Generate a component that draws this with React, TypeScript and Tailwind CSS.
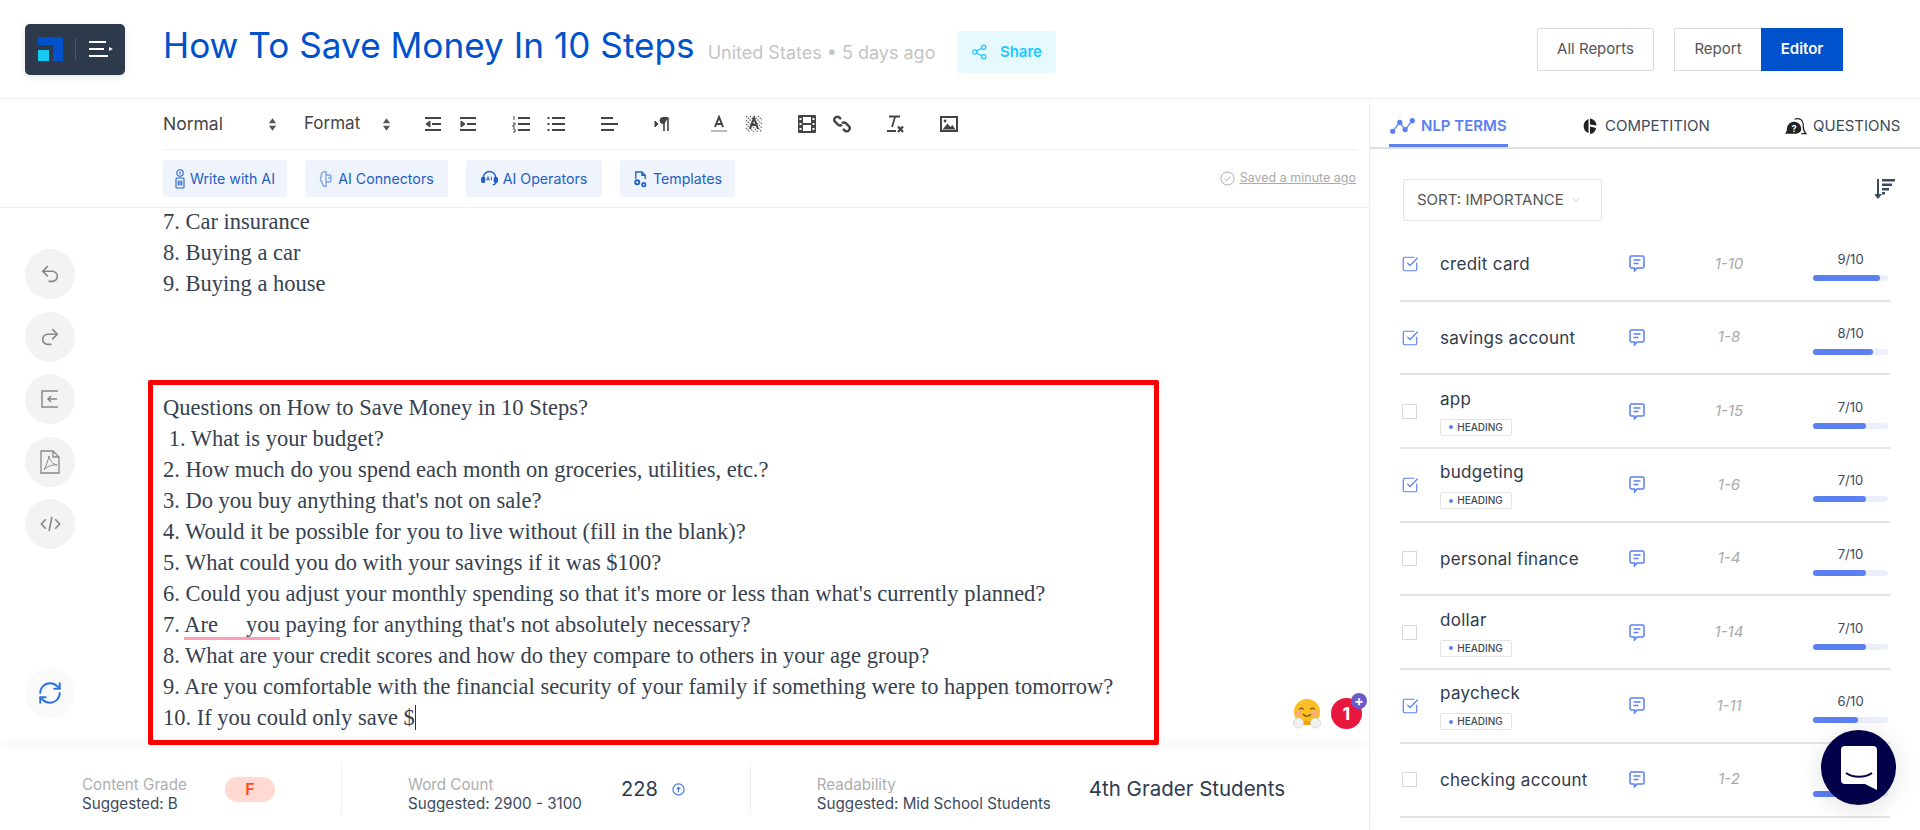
import { ChevronDown, RefreshCw, Redo2, SquareCheckBig, Undo2 } from "lucide-react";
import type { ReactNode } from "react";

interface Term {
  name: string;
  range: string;
  score: number;
  checked?: boolean;
  heading?: boolean;
}

const terms: Term[] = [
  { name: "credit card", range: "1-10", score: 9, checked: true },
  { name: "savings account", range: "1-8", score: 8, checked: true },
  { name: "app", range: "1-15", score: 7, heading: true },
  { name: "budgeting", range: "1-6", score: 7, checked: true, heading: true },
  { name: "personal finance", range: "1-4", score: 7 },
  { name: "dollar", range: "1-14", score: 7, heading: true },
  { name: "paycheck", range: "1-11", score: 6, checked: true, heading: true },
  { name: "checking account", range: "1-2", score: 6 },
];

const questions = [
  "Questions on How to Save Money in 10 Steps?",
  "\u00a01. What is your budget?",
  "2. How much do you spend each month on groceries, utilities, etc.?",
  "3. Do you buy anything that's not on sale?",
  "4. Would it be possible for you to live without (fill in the blank)?",
  "5. What could you do with your savings if it was $100?",
  "6. Could you adjust your monthly spending so that it's more or less than what's currently planned?",
];

function ToolIcon({ children, className = "" }: { children: ReactNode; className?: string }) {
  return (
    <svg viewBox="0 0 18 18" className={`h-[18px] w-[18px] shrink-0 ${className}`} fill="none" stroke="#444" strokeWidth="2">
      {children}
    </svg>
  );
}

function UpDown({ className = "" }: { className?: string }) {
  return (
    <svg viewBox="0 0 10 16" className={`h-[15px] w-[9px] ${className}`} fill="#555">
      <path d="M5 1l4 5.500H1zM5 15l4-5.500H1z" />
    </svg>
  );
}

function Toolbar() {
  return (
    <div className="mr-[12px] ml-[163px] flex h-[51px] items-center border-b border-[#eceff6] text-[17.500px] text-[#444]">
      <span className="w-[105px]">Normal</span>
      <UpDown />
      <span className="ml-[27px] w-[78px] text-[17px]">Format</span>
      <UpDown />
      <ToolIcon className="ml-[33px]">
        <path d="M1 3h16M8 9h9M1 15h16" />
        <path d="M6 6v6L2 9z" fill="#444" strokeWidth="1" />
      </ToolIcon>
      <ToolIcon className="ml-[17px]">
        <path d="M1 3h16M8 9h9M1 15h16" />
        <path d="M2 6v6l4-3z" fill="#444" strokeWidth="1" />
      </ToolIcon>
      <ToolIcon className="ml-[35px]">
        <path d="M6 3h12M6 9h12M6 15h12" />
        <path d="M2 1v4M1 8h2v2H1v2h2M1 14h2v3H1" strokeWidth="1" />
      </ToolIcon>
      <ToolIcon className="ml-[17px]">
        <path d="M5 3h13M5 9h13M5 15h13M0.500 3h2M0.500 9h2M0.500 15h2" />
      </ToolIcon>
      <ToolIcon className="ml-[35px]">
        <path d="M1 3h12M1 9h17M1 15h13" />
      </ToolIcon>
      <ToolIcon className="ml-[36px]">
        <path d="M1 6v6l3-3z" fill="#444" strokeWidth="1" />
        <path d="M10 3v13M14 3v13" strokeWidth="1.600" />
        <path d="M14 2.500h-5a3 3 0 000 6h1z" fill="#444" strokeWidth="1" />
      </ToolIcon>
      <ToolIcon className="ml-[38px]">
        <path d="M5 12l4-10 4 10M6.500 9h5" strokeWidth="2" />
        <path d="M1 16h16" stroke="#bbb" />
      </ToolIcon>
      <ToolIcon className="ml-[17px]">
        <path d="M1 1l16 16M5 1l12 12M1 5l12 12M9 1l8 8M1 9l8 8M13 1l4 4M1 13l4 4" stroke="#666" strokeWidth="1.200" strokeDasharray="1.500 1" />
        <path d="M5 14L9 3l4 11M6.500 10h5" strokeWidth="2" />
      </ToolIcon>
      <ToolIcon className="ml-[35px]">
        <path fillRule="evenodd" d="M1 0h16a1 1 0 011 1v16a1 1 0 01-1 1H1a1 1 0 01-1-1V1a1 1 0 011-1zM5 2v6h8V2zM5 10v6h8v-6zM1.500 3v2h2V3zM1.500 8v2h2V8zM1.500 13v2h2v-2zM14.500 3v2h2V3zM14.500 8v2h2V8zM14.500 13v2h2v-2z" fill="#444" stroke="none" />
      </ToolIcon>
      <ToolIcon className="ml-[17px]">
        <path d="M8 4L6 2.300a3 3 0 00-4 4.400L5 9.600a3 3 0 004 .2" strokeWidth="2.400" />
        <path d="M10 14l2 1.700a3 3 0 004-4.400L13 8.400a3 3 0 00-4-.2" strokeWidth="2.400" />
      </ToolIcon>
      <ToolIcon className="ml-[35px]">
        <path d="M3 1.500h11M9 2L6 12M1 16h9" strokeWidth="1.800" />
        <path d="M12 11.500l5 5.500M17 11.500L12 17" strokeWidth="2.200" />
      </ToolIcon>
      <ToolIcon className="ml-[36px]">
        <path fillRule="evenodd" d="M0 1h18v16H0zM2 3v12h14V3z" fill="#444" stroke="none" />
        <path d="M2.500 14.500l5-6 3 3.500 2-2 3 4.500z" fill="#444" stroke="none" />
        <circle cx="5" cy="6" r="1.400" fill="#444" stroke="none" />
      </ToolIcon>
    </div>
  );
}

function AiButton({ label, width, icon }: { label: string; width: string; icon: ReactNode }) {
  return (
    <button className={`flex h-[37px] items-center justify-center gap-[5px] rounded-[3px] bg-[#eff4fc] text-[14.200px] text-[#2160c4] ${width}`}>
      {icon}
      {label}
    </button>
  );
}

function ActionBar() {
  return (
    <div className="flex h-[58px] items-center border-b border-[#eceff6] pr-[13px] pl-[163px]">
      <div className="flex gap-[18px]">
        <AiButton
          label="Write with AI"
          width="w-[124px]"
          icon={
            <svg viewBox="0 0 10 20" className="h-[20px] w-[10px]" fill="none" stroke="#2160c4" strokeWidth="1.100">
              <circle cx="5" cy="4" r="3.200" />
              <path d="M5 2.500v3" />
              <rect x="1" y="9" width="8" height="10" rx="1" />
              <path d="M3.300 11.500v5M5 11.500v5M6.700 11.500v5" />
            </svg>
          }
        />
        <AiButton
          label="AI Connectors"
          width="w-[143px]"
          icon={
            <svg viewBox="0 0 14 18" className="h-[18px] w-[14px]" fill="none" stroke="#7ea7e6" strokeWidth="1.400">
              <path d="M7 1.500C3 1.500 1.500 4 2.500 6 1 8 1 11 3 12c0 3 2 4.500 4 4.500zM7 5h3a2 2 0 012 2v1H9M7 12h3a2 2 0 002-2V8" />
            </svg>
          }
        />
        <AiButton
          label="AI Operators"
          width="w-[136px]"
          icon={
            <svg viewBox="0 0 18 18" className="h-[17px] w-[17px]" fill="none" stroke="#2160c4" strokeWidth="1.500">
              <path d="M2.500 11V8a6.500 6.500 0 0113 0v3a3 3 0 01-3 4.500" />
              <rect x="0.800" y="8" width="3" height="5" rx="1" fill="#2160c4" />
              <rect x="14.200" y="8" width="3" height="5" rx="1" fill="#2160c4" />
              <path d="M6 11l1.500-4L9 11M6.500 10h2M11 7v4" strokeWidth="1" />
            </svg>
          }
        />
        <AiButton
          label="Templates"
          width="w-[115px]"
          icon={
            <svg viewBox="0 0 16 18" className="h-[18px] w-[15px]" fill="none" stroke="#2160c4" strokeWidth="1.400">
              <path d="M3 9V1.500h6.500L13 5v4M9.500 1.500V5H13" />
              <circle cx="4.500" cy="12.500" r="2.200" strokeWidth="2" />
              <circle cx="11.500" cy="15" r="1.800" strokeWidth="1.800" />
            </svg>
          }
        />
      </div>
      <div className="ml-auto flex items-center gap-[5px] text-[12.500px] text-[#aaa]">
        <svg viewBox="0 0 16 16" className="h-[15px] w-[15px]" fill="none" stroke="#aaa" strokeWidth="1">
          <circle cx="8" cy="8" r="7" />
          <path d="M5 8.300l2.200 2.200L11 6" />
        </svg>
        <span className="underline">Saved a minute ago</span>
      </div>
    </div>
  );
}

function RailButton({ children }: { children: ReactNode }) {
  return <div className="flex h-[50px] w-[50px] items-center justify-center rounded-full bg-[#f3f3f3] text-[#888]">{children}</div>;
}

function SideRail() {
  return (
    <div className="flex w-[148px] shrink-0 flex-col gap-[12.500px] pt-[41px] pb-[30px] pl-[25px]">
      <RailButton>
        <Undo2 size={22} strokeWidth={1.800} />
      </RailButton>
      <RailButton>
        <Redo2 size={22} strokeWidth={1.800} />
      </RailButton>
      <RailButton>
        <svg viewBox="0 0 20 20" className="h-[20px] w-[20px]" fill="none" stroke="#888" strokeWidth="1.500">
          <path d="M18 2H2v16h16M17 10H8M11 7l-3 3 3 3" />
        </svg>
      </RailButton>
      <RailButton>
        <svg viewBox="0 0 20 24" className="h-[24px] w-[20px]" fill="none" stroke="#888" strokeWidth="1.300">
          <path d="M1 1h12l6 6v16H1zM13 1v6h6" />
          <path d="M9 6c1 4 3 8 8 9-4-.5-9 .5-13 5 2-4 4-9 5-14z" strokeWidth="1" />
        </svg>
      </RailButton>
      <RailButton>
        <svg viewBox="0 0 22 16" className="h-[16px] w-[21px]" fill="none" stroke="#888" strokeWidth="1.700">
          <path d="M6 3L1.500 8 6 13M16 3l4.500 5L16 13M12.500 0.500L9.500 15.500" />
        </svg>
      </RailButton>
      <div className="mt-auto flex h-[50px] w-[50px] items-center justify-center rounded-full bg-[#fafafa] text-[#2f74de]">
        <RefreshCw size={26} strokeWidth={1.800} />
      </div>
    </div>
  );
}

function EditorBody() {
  return (
    <div className="flex min-w-0 flex-1 flex-col font-['Liberation_Serif',serif] text-[22.500px] leading-[31px] text-[#36414f]">
      <div className="-mt-[2px] pl-[15px]">
        <p>7. Car insurance</p>
        <p>8. Buying a car</p>
        <p>9. Buying a house</p>
      </div>
      <div className="mt-[81px] w-[1011px] rounded-[2px] border-[5px] border-[#ff0000] pt-[7px] pb-[7px] pl-[10px]">
        {questions.map((q) => (
          <p key={q}>{q}</p>
        ))}
        <p>
          7. <span className="border-b-[3px] border-[#ff9db5]">Are<span className="inline-block w-[28px]" />you</span> paying for anything that's not absolutely necessary?
        </p>
        <p>8. What are your credit scores and how do they compare to others in your age group?</p>
        <p>9. Are you comfortable with the financial security of your family if something were to happen tomorrow?</p>
        <p>
          10. If you could only save $<span className="border-r border-[#333]" />
        </p>
      </div>
    </div>
  );
}

function FloatingBadges() {
  return (
    <>
      <svg viewBox="0 0 28 30" className="absolute top-[600px] left-[1293px] h-[30px] w-[28px]">
        <ellipse cx="14" cy="13" rx="13" ry="13" fill="#fbbf24" />
        <path d="M14 26c4 0 7-2 8-4H6c1 2 4 4 8 4z" fill="#f59e0b" />
        <circle cx="6" cy="14" r="3" fill="#fca5a5" opacity="0.700" />
        <circle cx="22" cy="14" r="3" fill="#fca5a5" opacity="0.700" />
        <path d="M6.500 10.500c1-2 3-2 4 0M17.500 10.500c1-2 3-2 4 0M10 15c2 3 6 3 8 0" fill="none" stroke="#5b3a06" strokeWidth="1.200" />
        <circle cx="5.500" cy="24" r="5" fill="#f1f1f1" stroke="#cfcfcf" strokeWidth="0.800" />
        <circle cx="22.500" cy="24" r="5" fill="#f1f1f1" stroke="#cfcfcf" strokeWidth="0.800" />
      </svg>
      <div className="absolute top-[599px] left-[1331px] flex h-[31px] w-[31px] items-center justify-center rounded-full bg-[#e8173d] text-[18px] font-bold text-white">1</div>
      <div className="absolute top-[594px] left-[1351px] flex h-[16px] w-[16px] items-center justify-center rounded-full bg-[#6a5acd] text-[14px] leading-none font-bold text-white">+</div>
    </>
  );
}

function MetricLabel({ title, suggested, className = "" }: { title: string; suggested: string; className?: string }) {
  return (
    <div className={`mt-[10px] text-[15.200px] leading-[19px] ${className}`}>
      <div className="text-[#aeaeae]">{title}</div>
      <div className="text-[#3d4a5c]">{suggested}</div>
    </div>
  );
}

function Footer() {
  return (
    <div className="relative flex h-[82px] shrink-0 items-center bg-white pl-[82px] shadow-[0_-6px_12px_rgba(0,0,0,0.03)]">
      <MetricLabel title="Content Grade" suggested="Suggested: B" className="w-[143px]" />
      <div className="flex h-[25px] w-[50px] items-center justify-center rounded-full bg-[#ffd9d2] text-[16px] font-semibold text-[#ff4a22]">F</div>
      <div className="mr-[66px] ml-[66px] h-[50px] w-px bg-[#eceff6]" />
      <MetricLabel title="Word Count" suggested="Suggested: 2900 - 3100" className="w-[213px]" />
      <span className="text-[20px] text-[#2f3b4c]">228</span>
      <svg viewBox="0 0 14 14" className="ml-[14px] h-[13px] w-[13px]" fill="none" stroke="#3f6fe8" strokeWidth="1.200">
        <circle cx="7" cy="7" r="6" />
        <path d="M7 10V5M5 6.500L7 4.500l2 2" />
      </svg>
      <div className="mr-[66px] ml-[65px] h-[50px] w-px bg-[#eceff6]" />
      <MetricLabel title="Readability" suggested="Suggested: Mid School Students" className="w-[272px]" />
      <span className="text-[20.500px] text-[#2f3b4c]">4th Grader Students</span>
    </div>
  );
}

function Tabs() {
  return (
    <div className="flex h-[50px] items-center border-b-2 border-[#dedede] pt-[6px] text-[15px] text-[#3d4a5c]">
      <div className="relative ml-[19px] flex h-full w-[192px] items-center gap-[5px] font-semibold text-[#5b80f2]">
        <svg viewBox="0 0 28 18" className="h-[16px] w-[27px]" fill="none" stroke="#5b80f2" strokeWidth="1.500">
          <path d="M3 15l8-10 6 8 8-10" />
          <circle cx="3" cy="15" r="2.200" fill="#5b80f2" />
          <circle cx="11" cy="5" r="2.200" fill="#5b80f2" />
          <circle cx="17" cy="13" r="2.200" fill="#5b80f2" />
          <circle cx="25" cy="3" r="2.200" fill="#5b80f2" />
        </svg>
        NLP TERMS
        <div className="absolute bottom-0 left-0 h-[3px] w-[119px] bg-[#5b80f2]" />
      </div>
      <div className="flex w-[203px] items-center gap-[7px]">
        <svg viewBox="0 0 18 18" className="h-[18px] w-[17px]" fill="#222">
          <path d="M8 1.500A8 8 0 008 16.500zM9.500 1v6.500l7 1A8 8 0 009.500 1zM9.500 9.500v8a8 8 0 006.500-6.500z" />
        </svg>
        COMPETITION
      </div>
      <div className="flex items-center gap-[6px]">
        <svg viewBox="0 0 24 18" className="h-[18px] w-[23px]" fill="#222">
          <path d="M1 17c1-1 2-2 2-5a7.500 7.500 0 1115 0c0 3-3 5-7 5z" />
          <path d="M11 2c5-2 10 1 9 7 0 4 2 7 3 8h-5" fill="none" stroke="#222" strokeWidth="1.300" />
          <text x="8" y="15" fontSize="9" fontWeight="700" fill="#fff" fontFamily="Inter, sans-serif">?</text>
        </svg>
        QUESTIONS
      </div>
    </div>
  );
}

function TermRow({ term }: { term: Term }) {
  return (
    <div className="flex h-[73.700px] items-center border-b-2 border-[#e4e4e4]">
      <div className="flex w-[40px] shrink-0 pl-[2px]">
        {term.checked ? (
          <SquareCheckBig size={18} strokeWidth={1.600} className="-ml-[1px] text-[#5b80f2]" />
        ) : (
          <div className="h-[15px] w-[15px] border border-[#d8d8d8]" />
        )}
      </div>
      <div className="w-[189px] shrink-0">
        <div className="text-[17px] leading-[24px] tracking-[0.300px] text-[#2f3b4c]">{term.name}</div>
        {term.heading && (
          <div className="mt-[8px] flex h-[17px] w-[72px] items-center justify-center gap-[4px] rounded-[2px] border border-[#e4e4e4] text-[10px] font-medium text-[#3d4a5c]">
            <span className="h-[4px] w-[4px] rounded-full bg-[#5b80f2]" />
            HEADING
          </div>
        )}
      </div>
      <svg viewBox="0 0 16 17" className="h-[17px] w-[16px] shrink-0" fill="none" stroke="#5b80f2" strokeWidth="1.500">
        <path d="M2.500 1h11A1.500 1.500 0 0115 2.500v9a1.500 1.500 0 01-1.500 1.500H8l-2.500 3V13h-3A1.500 1.500 0 011 11.500v-9A1.500 1.500 0 012.500 1z" />
        <path d="M4.500 5h7M4.500 8.500h5" />
      </svg>
      <div className="ml-[39px] w-[90px] shrink-0 text-center text-[15px] text-[#aaa] italic">{term.range}</div>
      <div className="ml-[39px] w-[75px] shrink-0 pt-[4px] text-center">
        <div className="text-[13px] leading-[18px] text-[#3d4a5c]">{term.score}/10</div>
        <div className="mt-[7px] h-[6px] rounded-full bg-[#eaeffb]">
          {/* score is data, so the width comes from an inline style */}
          <div className="h-full rounded-full bg-[#5b80f2]" style={{ width: `${term.score * 10 - (term.score > 8 ? 1 : 0)}%` }} />
        </div>
      </div>
    </div>
  );
}

function TermsPanel() {
  return (
    <div className="flex w-[550px] shrink-0 flex-col">
      <Tabs />
      <div className="px-[30px] pt-[30px]">
        <div className="flex items-start justify-between pl-[3px]">
          <div className="flex h-[42px] w-[199px] items-center gap-[6px] rounded-[2px] border border-[#e4e4e4] pl-[13px] text-[15px] text-[#555]">
            SORT: IMPORTANCE
            <ChevronDown size={12} className="text-[#ccc]" />
          </div>
          <svg viewBox="0 0 20 20" className="mr-[-5px] h-[20px] w-[20px]" fill="#3d4a5c">
            <path d="M2 0h2v15h3l-4 5-4-5h3z" />
            <path d="M7 0h13v2.500H7zM7 4.500h10V7H7zM7 9h7v2.500H7zM7 13h3v2.500H7z" />
          </svg>
        </div>
        <div className="mt-[7px]">
          {terms.map((term) => (
            <TermRow key={term.name} term={term} />
          ))}
        </div>
      </div>
    </div>
  );
}

export default function App() {
  return (
    <div className="relative h-[830px] w-[1920px] overflow-hidden bg-white font-['Inter',sans-serif]">
      <header className="flex h-[99px] items-center border-b border-[#eceff6] pl-[25px]">
        <div className="flex h-[51px] w-[100px] items-center rounded-[5px] bg-[#2c3a4b] pl-[13px] shadow-[0_2px_6px_rgba(0,0,0,0.1)]">
          <svg viewBox="0 0 25 24" className="h-[24px] w-[25px]">
            <path d="M0 0h25v24h-10V8H0z" fill="#0052cc" />
            <rect x="0" y="13" width="11" height="11" fill="#18c8f5" />
          </svg>
          <div className="ml-[12px] h-[22px] w-px bg-[#4a5868]" />
          <svg viewBox="0 0 24 16" className="ml-[13px] h-[16px] w-[24px]" fill="none" stroke="#fff" strokeWidth="2">
            <path d="M0 1h17M0 8h15M0 15h19" />
            <path d="M20 6l4 2-4 2z" fill="#fff" stroke="none" />
          </svg>
        </div>
        <h1 className="mb-[6px] ml-[38px] text-[35.200px] leading-none text-[#0052cc]">How To Save Money In 10 Steps</h1>
        <span className="mt-[7px] ml-[13px] text-[18px] text-[#c4c4c4]">United States • 5 days ago</span>
        <button className="mt-[5px] ml-[22px] flex h-[42px] w-[99px] items-center justify-center gap-[13px] rounded-[3px] bg-[#e5f9ff] pt-[1px] text-[15px] font-semibold text-[#1cc8ff]">
          <svg viewBox="0 0 16 16" className="h-[16px] w-[15px]" fill="none" stroke="#1cc8ff" strokeWidth="1.300">
            <circle cx="3" cy="8" r="2.300" />
            <circle cx="12.500" cy="3" r="2.300" />
            <circle cx="12.500" cy="13" r="2.300" />
            <path d="M5 7l5.500-3M5 9l5.500 3" />
          </svg>
          Share
        </button>
        <div className="mr-[77px] ml-auto flex items-center text-[15px] text-[#555]">
          <button className="h-[43px] w-[117px] rounded-[2px] border border-[#dcdcdc]">All Reports</button>
          <button className="ml-[20px] h-[43px] w-[87px] border border-r-0 border-[#dcdcdc]">Report</button>
          <button className="h-[43px] w-[82px] bg-[#0052cc] font-semibold text-white">Editor</button>
        </div>
      </header>
      <div className="flex h-[731px]">
        <div className="relative flex w-[1370px] shrink-0 flex-col border-r border-[#eceff6]">
          <Toolbar />
          <ActionBar />
          <div className="flex min-h-0 flex-1 overflow-hidden">
            <SideRail />
            <EditorBody />
          </div>
          <FloatingBadges />
          <Footer />
        </div>
        <TermsPanel />
      </div>
      {/* chat launcher floats over the panel */}
      <div className="absolute top-[730px] left-[1821px] flex h-[75px] w-[75px] items-center justify-center rounded-full bg-[#020048] shadow-[0_4px_24px_rgba(0,0,0,0.12)]">
        <svg viewBox="0 0 36 44" className="h-[44px] w-[36px]">
          <path d="M4 0h28a4 4 0 014 4v40l-12-6H4a4 4 0 01-4-4V4a4 4 0 014-4z" fill="#fff" />
          <path d="M5 27c7 5 19 5 26 0" fill="none" stroke="#020048" strokeWidth="2" />
        </svg>
      </div>
    </div>
  );
}
